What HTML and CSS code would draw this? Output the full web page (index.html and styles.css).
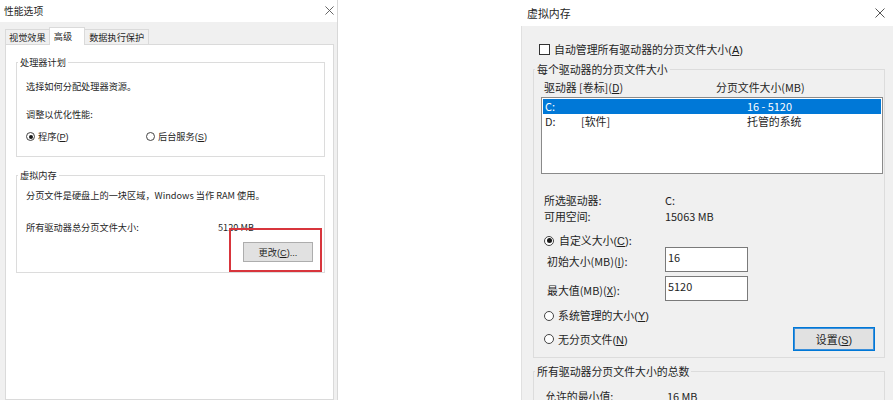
FILE: index.html
```html
<!DOCTYPE html>
<html lang="zh-CN">
<head>
<meta charset="utf-8">
<title>性能选项 / 虚拟内存</title>
<link rel="stylesheet" href="styles.css">
</head>
<body>
<div class="screen">
  <section class="dlg perf">
    <header class="titlebar">
      <span class="title">性能选项</span>
      <svg class="close" viewBox="0 0 10 10"><path d="M0.5 0.5L9.5 9.5M9.5 0.5L0.5 9.5"/></svg>
    </header>
    <div class="perf-body">
      <nav class="tabs">
        <span class="tab t1">视觉效果</span>
        <span class="tab active">高级</span>
        <span class="tab t3">数据执行保护</span>
      </nav>
      <div class="page">
        <fieldset class="group g-cpu">
          <legend>处理器计划</legend>
          <div class="gbody">
            <p class="line l1">选择如何分配处理器资源。</p>
            <p class="line l2">调整以优化性能:</p>
            <div class="radio-row">
              <label class="radio"><span class="dot on"></span><span>程序<span class="acc">(<u>P</u>)</span></span></label>
              <label class="radio"><span class="dot"></span><span>后台服务<span class="acc">(<u>S</u>)</span></span></label>
            </div>
          </div>
        </fieldset>
        <fieldset class="group g-vmem">
          <legend>虚拟内存</legend>
          <div class="gbody">
            <p class="line l1">分页文件是硬盘上的一块区域，Windows 当作 RAM 使用。</p>
            <div class="total"><span>所有驱动器总分页文件大小:</span><span>5120 MB</span></div>
            <div class="btn-row"><span class="hl"><button class="btn btn-change"><span>更改<span class="acc">(<u>C</u>)...</span></span></button></span></div>
          </div>
        </fieldset>
      </div>
    </div>
  </section>

  <section class="dlg vm">
    <header class="titlebar">
      <span class="title">虚拟内存</span>
      <svg class="close" viewBox="0 0 10 10"><path d="M0.5 0.5L9.5 9.5M9.5 0.5L0.5 9.5"/></svg>
    </header>
    <div class="vm-body">
      <label class="check-row"><span class="box"></span><span>自动管理所有驱动器的分页文件大小<span class="acc">(<u>A</u>)</span></span></label>
      <fieldset class="group g-drives">
        <legend>每个驱动器的分页文件大小</legend>
        <div class="gbody">
          <div class="cols"><span>驱动器 [卷标](<u>D</u>)</span><span>分页文件大小(MB)</span></div>
          <div class="listbox">
            <div class="lrow sel"><span>C:</span><span></span><span>16 - 5120</span></div>
            <div class="lrow"><span>D:</span><span>[软件]</span><span>托管的系统</span></div>
          </div>
          <div class="info">
            <span>所选驱动器:</span><span>C:</span>
            <span>可用空间:</span><span>15063 MB</span>
          </div>
          <label class="radio r-custom"><span class="dot on"></span><span>自定义大小<span class="acc">(<u>C</u>)</span>:</span></label>
          <div class="field f1"><span class="flabel">初始大小(MB)(<u>I</u>):</span><span class="input">16</span></div>
          <div class="field f2"><span class="flabel">最大值(MB)(<u>X</u>):</span><span class="input">5120</span></div>
          <label class="radio r-sys"><span class="dot"></span><span>系统管理的大小<span class="acc">(<u>Y</u>)</span></span></label>
          <div class="last-row">
            <label class="radio"><span class="dot"></span><span>无分页文件<span class="acc">(<u>N</u>)</span></span></label>
            <button class="btn btn-set"><span>设置<span class="acc">(<u>S</u>)</span></span></button>
          </div>
        </div>
      </fieldset>
      <fieldset class="group g-total">
        <legend>所有驱动器分页文件大小的总数</legend>
        <div class="gbody">
          <div class="info info-total"><span>允许的最小值:</span><span>16 MB</span></div>
        </div>
      </fieldset>
    </div>
  </section>
</div>
</body>
</html>
```

FILE: styles.css
```css
* { box-sizing: border-box; }
html, body { margin: 0; padding: 0; background: #fff; }
body {
  font-family: "Noto Sans CJK SC", "Noto Sans", sans-serif;
  color: #1f1f1f;
  text-autospace: no-autospace;
}
u { text-decoration-thickness: 1px; text-underline-offset: 1px; }
p { margin: 0; }
.acc { font-family: "Liberation Sans", "Noto Sans CJK SC", sans-serif; }

.screen { display: flex; width: 893px; height: 400px; overflow: hidden; }
.dlg { display: flex; flex-direction: column; flex: none; }

.titlebar {
  display: flex; align-items: center; justify-content: space-between;
  background: #fff; flex: none;
}
.close { fill: none; stroke: #555; stroke-width: 1; }

/* ---------- left dialog ---------- */
.perf { width: 338px; font-size: 9.2px; border-right: 1px solid #d8d8d8; }
.perf .titlebar { height: 22px; padding: 0 3px 1px 4px; font-size: 9.8px; }
.perf .close { width: 9px; height: 9px; }

.perf-body {
  flex: 1; display: flex; flex-direction: column;
  background: #f0f0f0; padding: 0 3px 0 5px;
}
.tabs { height: 22px; display: flex; align-items: flex-end; flex: none; }
.tab {
  height: 15px; line-height: 14px; padding: 0 3px;
  border: 1px solid #dadada; border-bottom: none; background: #f0f0f0;
}
.tab.t1 { border-right: none; }
.tab.t3 { border-left: none; padding: 0 4px; }
.tab.active {
  height: 18px; line-height: 16px; padding: 0 12px 0 4px;
  background: #fff; margin-bottom: -1px; position: relative; z-index: 1;
}
.page {
  flex: 1; background: #fff; border: 1px solid #dadada;
  padding: 11px 8px 0 10px;
}

.group { margin: 0; padding: 0; border: 1px solid #dcdcdc; min-width: 0; }
.group legend { padding: 0 2px; margin-left: 1px; }
.perf .group legend { line-height: 12px; }

.line { line-height: 14px; }
.g-cpu .gbody { padding: 0 0 13px 9px; }
.g-cpu .l1 { margin-top: 11px; }
.g-cpu .l2 { margin-top: 14px; }

.radio-row {
  margin-top: 8px; height: 14px;
  display: grid; grid-template-columns: 120px auto; align-items: center;
}
.radio { display: flex; align-items: center; gap: 3px; line-height: 14px; }
.dot {
  width: 9px; height: 9px; border-radius: 50%;
  border: 1px solid #444; background: #fff; flex: none;
  display: flex; align-items: center; justify-content: center;
}
.dot.on::after {
  content: ""; width: 4px; height: 4px; border-radius: 50%; background: #1a1a1a;
}

.g-vmem { margin-top: 12px; }
.g-vmem .gbody { padding: 0 0 10px 9px; }
.g-vmem .l1 { margin-top: 7px; }
.total {
  margin-top: 18px; line-height: 14px;
  display: grid; grid-template-columns: 192px auto;
}
.btn-row { margin-top: 8px; display: flex; justify-content: flex-end; padding-right: 11px; }
.hl { position: relative; display: flex; }
.hl::after {
  content: ""; position: absolute;
  top: -14px; left: -14px; right: -9px; bottom: -10px;
  border: 2px solid #d8353c;
}
.btn {
  font: inherit; color: #1f1f1f; margin: 0; padding: 0;
  background: #e1e1e1; border: 1px solid #adadad;
  display: flex; align-items: center; justify-content: center;
}
.btn-change { width: 70px; height: 20px; }

/* ---------- right dialog ---------- */
.vm { width: 372px; margin-left: auto; font-size: 10.9px; }
.vm .titlebar { height: 26px; padding: 0 8px 0 6px; }
.vm .close { width: 10px; height: 10px; }

.vm-body {
  flex: 1; background: #f0f0f0; border-left: 1px solid #e0e0e0;
  padding: 16px 8px 0 11px;
}
.check-row {
  display: flex; align-items: center; gap: 4px;
  height: 14px; line-height: 14px; padding-left: 6px;
}
.box { width: 11px; height: 11px; border: 1px solid #333; background: #fff; flex: none; }

.vm .group legend { line-height: 14px; }
.g-drives { margin-top: 6px; }
.g-drives .gbody { padding: 0 1px 6px 7px; }
.cols {
  margin-top: 4px; padding-left: 3px; line-height: 14px;
  display: grid; grid-template-columns: 172px auto;
}
.listbox {
  margin-top: 3px; height: 77px; background: #fff;
  border: 1px solid #8a8a8a; padding: 1px 1px 0 1px;
}
.lrow {
  height: 15px; line-height: 15px; padding-left: 2px;
  display: grid; grid-template-columns: 36px 166px auto;
}
.lrow.sel { background: #0078d7; color: #fff; }

.info {
  margin-top: 18px; padding-left: 3px; line-height: 16px;
  display: grid; grid-template-columns: 121px auto;
}
.r-custom { margin-top: 10px; height: 13px; padding-left: 3px; gap: 5px; }
.vm .radio .dot { width: 10px; height: 10px; }
.vm .radio .dot.on::after { width: 5px; height: 5px; }

.field {
  height: 25px; padding-left: 6px;
  display: grid; grid-template-columns: 118px 83px; align-items: center;
}
.flabel { padding-top: 3px; line-height: 14px; }
.field.f2 { margin-top: 4px; }
.input {
  height: 25px; background: #fff; border: 1px solid #7a7a7a;
  padding: 2px 2px 0 2px; line-height: 14px;
}
.r-sys { margin-top: 8px; height: 13px; padding-left: 3px; gap: 4px; }

.last-row {
  margin-top: 5px; height: 24px; padding-left: 3px; padding-right: 8px;
  display: flex; align-items: center; justify-content: space-between;
}
.last-row .radio { gap: 4px; }
.btn-set {
  width: 82px; height: 24px; border: 1px solid #0078d7;
  box-shadow: inset 0 0 0 1px #3c8fd9;
}

.g-total { margin-top: 6px; }
.g-total .gbody { padding: 0 1px 20px 7px; }
.info-total { margin-top: 10px; padding-left: 4px; grid-template-columns: 122px auto; }
```
